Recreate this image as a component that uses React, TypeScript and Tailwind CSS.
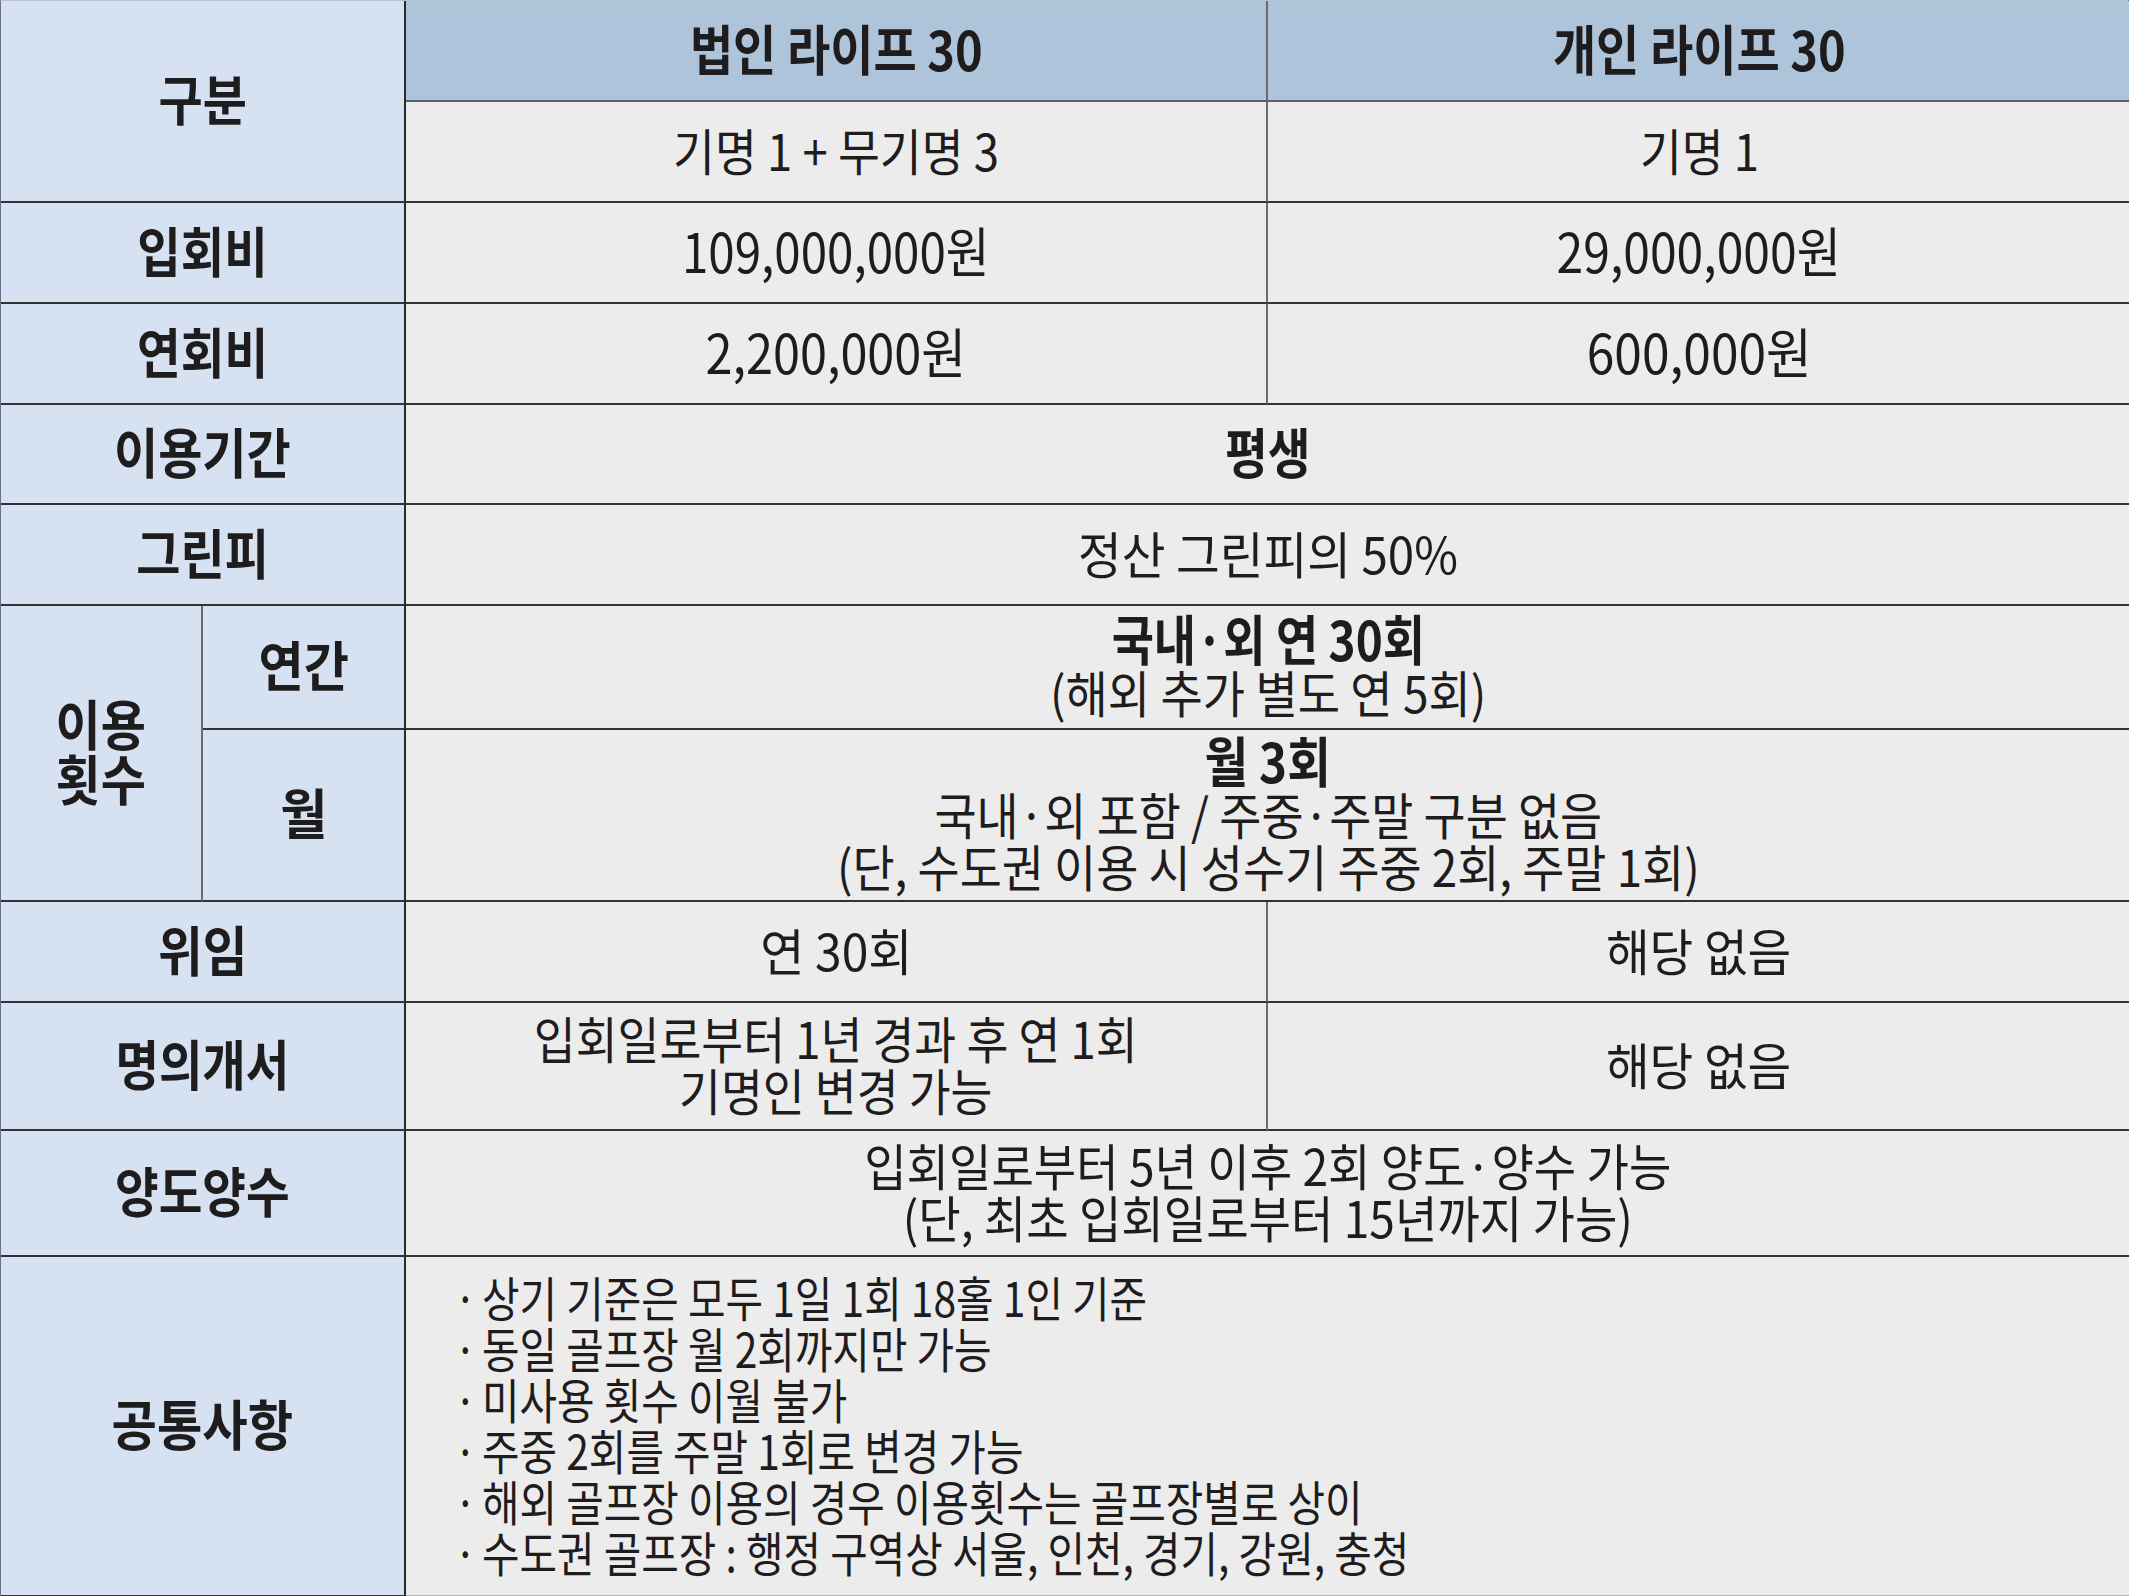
import React from "react";

const LBL =
  "flex items-center justify-center text-center bg-[#d6e1f2] border-r-2 border-b-2 border-r-[#2a2a2a] border-b-[#333333]";
const VAL =
  "flex items-center justify-center text-center bg-[#ececec] border-b-2 border-b-[#333333]";

function B({ children, className = "" }: { children: React.ReactNode; className?: string }) {
  return (
    <div className={"whitespace-nowrap font-bold text-[54px] leading-[54px] -translate-y-[3px] " + className}>
      {children}
    </div>
  );
}

function R({ children, className = "" }: { children: React.ReactNode; className?: string }) {
  return (
    <div className={"whitespace-nowrap font-normal text-[50px] leading-[52px] -translate-y-[3px] " + className}>
      {children}
    </div>
  );
}

export default function App() {
  const notes = [
    "상기 기준은 모두 1일 1회 18홀 1인 기준",
    "동일 골프장 월 2회까지만 가능",
    "미사용 횟수 이월 불가",
    "주중 2회를 주말 1회로 변경 가능",
    "해외 골프장 이용의 경우 이용횟수는 골프장별로 상이",
    "수도권 골프장 : 행정 구역상 서울, 인천, 경기, 강원, 충청",
  ];
  return (
    <div className="w-[2129px] h-[1596px] overflow-hidden bg-[#ececec] text-[#1f1c1d] font-['Noto_Sans_CJK_KR','Noto_Sans',sans-serif]">
      <div className="grid grid-cols-[202px_203px_862px_862px] grid-rows-[101px_101px_101px_101px_100px_101px_124px_172px_101px_128px_126px_340px] border-l border-l-[#6b6f8a] border-t border-t-[#b9c3cf] border-r-2 border-r-[#555555]">
        {/* Header */}
        <div className={LBL + " col-span-2 row-span-2"}>
          <B className="scale-x-[0.89]">구분</B>
        </div>
        <div className="flex items-center justify-center bg-[#aec4da] border-b-2 border-b-[#59626c] border-r-2 border-r-[#6a6a6a]">
          <B className="scale-x-[0.87]">법인 라이프 30</B>
        </div>
        <div className="flex items-center justify-center bg-[#aec4da] border-b-2 border-b-[#59626c]">
          <B className="scale-x-[0.87]">개인 라이프 30</B>
        </div>
        <div className={VAL + " border-r-2 border-r-[#6a6a6a]"}>
          <R className="scale-x-[0.91]">기명 1 + 무기명 3</R>
        </div>
        <div className={VAL}>
          <R className="scale-x-[0.91]">기명 1</R>
        </div>

        {/* 입회비 */}
        <div className={LBL + " col-span-2"}>
          <B className="scale-x-[0.875]">입회비</B>
        </div>
        <div className={VAL + " border-r-2 border-r-[#6a6a6a]"}>
          <R className="text-[54px] scale-x-[0.88]">109,000,000원</R>
        </div>
        <div className={VAL}>
          <R className="text-[54px] scale-x-[0.89]">29,000,000원</R>
        </div>

        {/* 연회비 */}
        <div className={LBL + " col-span-2"}>
          <B className="scale-x-[0.88]">연회비</B>
        </div>
        <div className={VAL + " border-r-2 border-r-[#6a6a6a]"}>
          <R className="text-[54px] scale-x-[0.9]">2,200,000원</R>
        </div>
        <div className={VAL}>
          <R className="text-[54px] scale-x-[0.92]">600,000원</R>
        </div>

        {/* 이용기간 */}
        <div className={LBL + " col-span-2"}>
          <B className="scale-x-[0.89]">이용기간</B>
        </div>
        <div className={VAL + " col-span-2"}>
          <B className="scale-x-[0.86]">평생</B>
        </div>

        {/* 그린피 */}
        <div className={LBL + " col-span-2"}>
          <B className="scale-x-[0.89]">그린피</B>
        </div>
        <div className={VAL + " col-span-2"}>
          <R className="scale-x-[0.95]">정산 그린피의 50%</R>
        </div>

        {/* 이용횟수 */}
        <div className={LBL + " row-span-2 border-r-[#6a6a6a]"}>
          <B className="leading-[55px] scale-x-[0.91]">
            이용
            <br />
            횟수
          </B>
        </div>
        <div className={LBL}>
          <B className="scale-x-[0.91]">연간</B>
        </div>
        <div className={VAL + " col-span-2 flex-col"}>
          <B className="leading-[54px] scale-x-[0.85]">국내·외 연 30회</B>
          <R className="leading-[52px] scale-x-[0.92]">(해외 추가 별도 연 5회)</R>
        </div>
        <div className={LBL}>
          <B className="scale-x-[0.95]">월</B>
        </div>
        <div className={VAL + " col-span-2 flex-col"}>
          <B className="leading-[52px] scale-x-[0.88]">월 3회</B>
          <R className="leading-[51px] scale-x-[0.915]">
            국내·외 포함 / 주중·주말 구분 없음
            <br />
            (단, 수도권 이용 시 성수기 주중 2회, 주말 1회)
          </R>
        </div>

        {/* 위임 */}
        <div className={LBL + " col-span-2"}>
          <B className="scale-x-[0.9]">위임</B>
        </div>
        <div className={VAL + " border-r-2 border-r-[#6a6a6a]"}>
          <R className="scale-x-[0.96]">연 30회</R>
        </div>
        <div className={VAL}>
          <R className="scale-x-[0.95]">해당 없음</R>
        </div>

        {/* 명의개서 */}
        <div className={LBL + " col-span-2"}>
          <B className="scale-x-[0.875]">명의개서</B>
        </div>
        <div className={VAL + " border-r-2 border-r-[#6a6a6a]"}>
          <R className="leading-[51px] scale-x-[0.91]">
            입회일로부터 1년 경과 후 연 1회
            <br />
            기명인 변경 가능
          </R>
        </div>
        <div className={VAL}>
          <R className="scale-x-[0.95]">해당 없음</R>
        </div>

        {/* 양도양수 */}
        <div className={LBL + " col-span-2"}>
          <B className="scale-x-[0.88]">양도양수</B>
        </div>
        <div className={VAL + " col-span-2"}>
          <R className="leading-[51px] scale-x-[0.922]">
            입회일로부터 5년 이후 2회 양도·양수 가능
            <br />
            (단, 최초 입회일로부터 15년까지 가능)
          </R>
        </div>

        {/* 공통사항 */}
        <div className={LBL + " col-span-2 border-b-[#9aa3b8]"}>
          <B className="scale-x-[0.914]">공통사항</B>
        </div>
        <div className="col-span-2 flex flex-col justify-center bg-[#ececec] border-b-2 border-b-[#b4b4b4] pl-[48px]">
          <div className="whitespace-nowrap text-[48px] leading-[51px] origin-left scale-x-[0.85] -translate-y-[2px]">
            {notes.map((n, i) => (
              <React.Fragment key={n}>
                {i > 0 && <br />}
                <span className="mr-[6px]">·</span>
                {n}
              </React.Fragment>
            ))}
          </div>
        </div>
      </div>
    </div>
  );
}
